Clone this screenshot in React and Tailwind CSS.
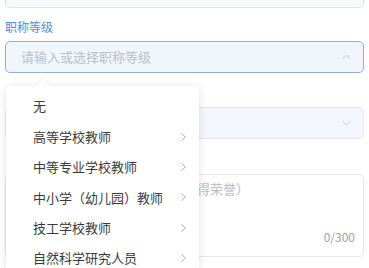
import React from "react";

const font = { fontFamily: '"Noto Sans CJK SC", "Noto Sans", sans-serif' };

const options = [
  { label: "无", sub: false },
  { label: "高等学校教师", sub: true },
  { label: "中等专业学校教师", sub: true },
  { label: "中小学（幼儿园）教师", sub: true },
  { label: "技工学校教师", sub: true },
  { label: "自然科学研究人员", sub: true },
];

function Chevron({ dir = "down", className = "" }) {
  const d = {
    down: "M3 5l5 5 5-5",
    up: "M3 10l5-5 5 5",
    right: "M6 3l5 5-5 5",
  }[dir];
  return (
    <svg viewBox="0 0 16 16" className={className} fill="none" stroke="currentColor" strokeWidth="1.2">
      <path d={d} />
    </svg>
  );
}

export default function App() {
  return (
    <div className="relative h-[268px] w-[369px] overflow-hidden bg-white px-[5px]" style={font}>
      {/* previous field, scrolled mostly out of view */}
      <div className="-mt-[25px] h-[33px] rounded-[5px] border border-[#dfe4ea] bg-[#f7f9fc]" />

      <div className="mt-[11px] text-[12px] leading-[16px] text-[#4a8fd8]">职称等级</div>

      <div className="mt-[6px] flex h-[32px] items-center justify-between rounded-[5px] border border-[#8eb0d6] bg-[#f1f6fd] pl-[15px] pr-[10px]">
        <span className="text-[13px] text-[#b9c0c9]">请输入或选择职称等级</span>
        <Chevron dir="up" className="h-[13px] w-[13px] text-[#c3cad3]" />
      </div>

      {/* label row hidden behind the popover */}
      <div className="mt-[16px] h-[16px]" />

      <div className="mt-[2px] flex h-[32px] items-center justify-end rounded-[5px] border border-[#e3e8ef] bg-[#f3f7fd] pr-[10px]">
        <Chevron dir="down" className="h-[13px] w-[13px] text-[#c3cad3]" />
      </div>

      <div className="mt-[17px] h-[16px]" />

      <div className="mt-[2px] flex h-[83px] flex-col justify-between rounded-[5px] border border-[#e3e6ea] bg-white pb-[10px] pl-[178px] pr-[8px] pt-[4px]">
        <span className="text-[13px] text-[#b4bcc6]">获得荣誉）</span>
        <span className="self-end text-[12px] text-[#9aa1a9]">0/300</span>
      </div>

      {/* dropdown popover */}
      <div className="absolute left-[6px] top-[86px] w-[193px] rounded-[4px] bg-white pt-[5px] shadow-[0_1px_8px_rgba(0,0,0,0.12)]">
        <div className="absolute -top-[5px] left-[32px] h-[10px] w-[10px] rotate-45 bg-white shadow-[-1px_-1px_2px_rgba(0,0,0,0.05)]" />
        {options.map((o) => (
          <div key={o.label} className="relative flex h-[30.4px] items-center justify-between pl-[27px] pr-[10px]">
            <span className="text-[13px] text-[#3a3a3a]">{o.label}</span>
            {o.sub && <Chevron dir="right" className="h-[12px] w-[12px] text-[#9a9fa6]" />}
          </div>
        ))}
      </div>
    </div>
  );
}
